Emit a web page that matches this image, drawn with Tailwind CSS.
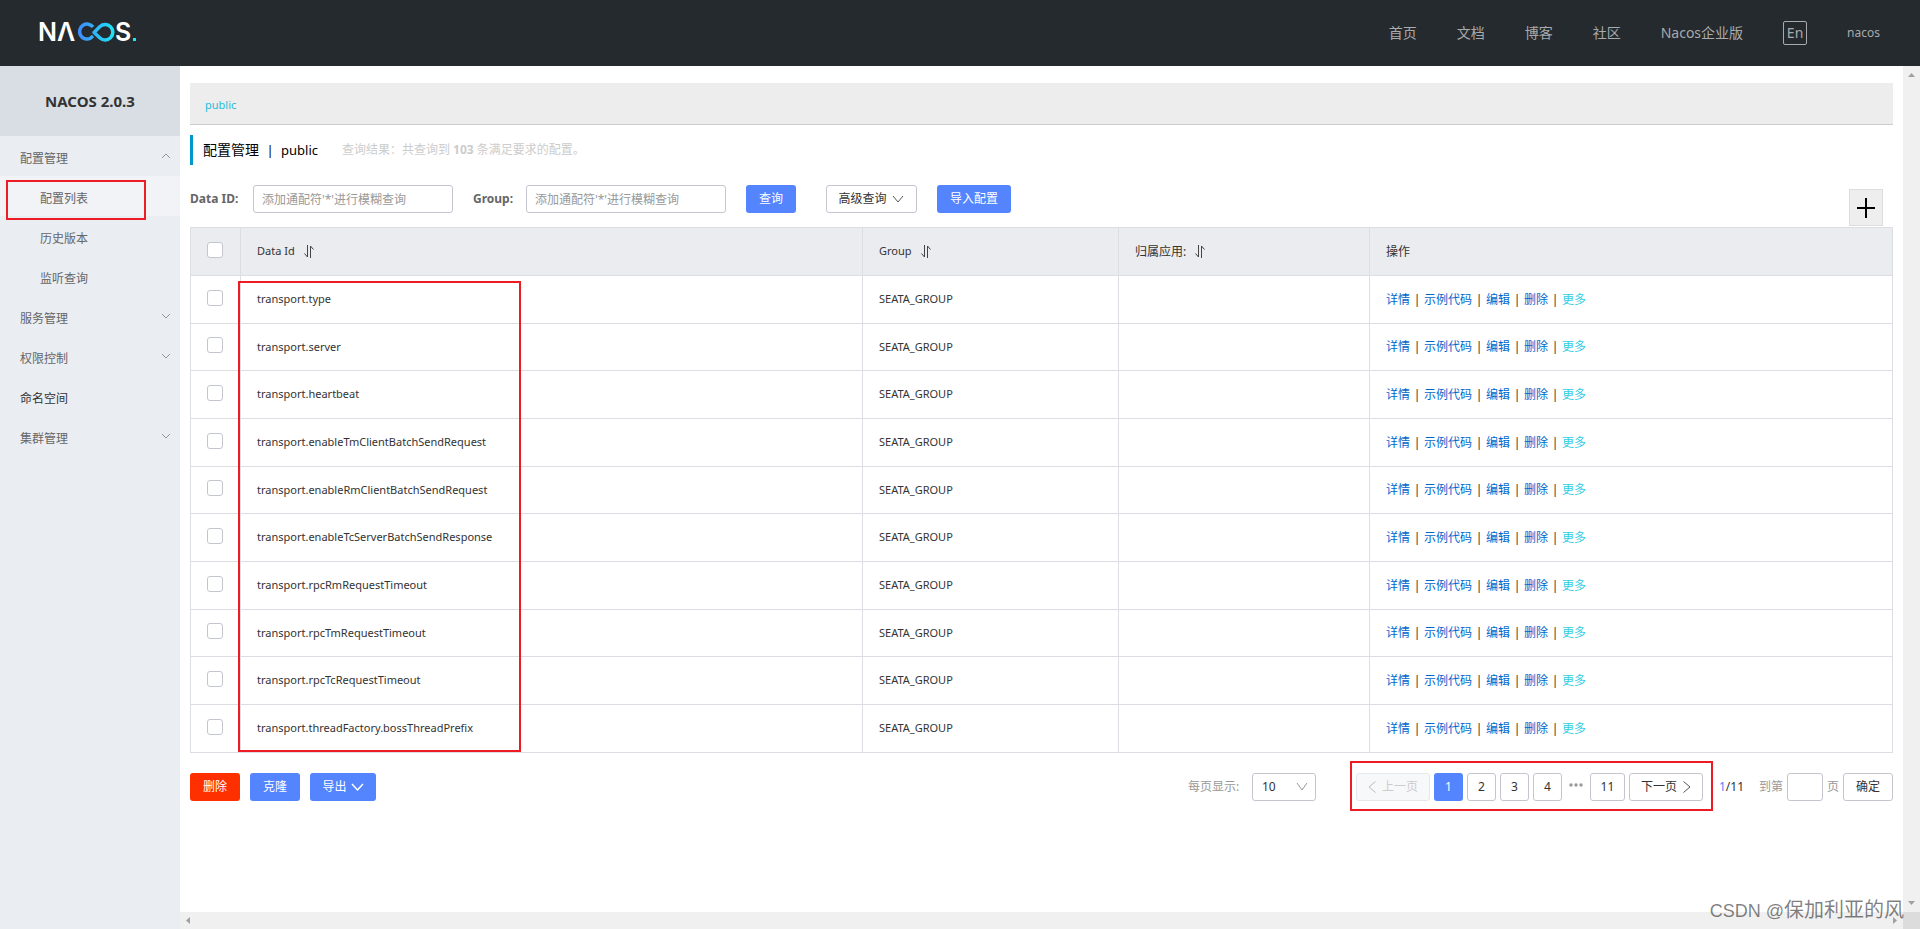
<!DOCTYPE html>
<html lang="zh-CN">
<head>
<meta charset="utf-8">
<title>Nacos</title>
<script src="https://cdn.jsdelivr.net/npm/@tailwindcss/browser@4"></script>
</head>
<body class="relative flex h-screen flex-col overflow-hidden bg-white font-['Noto_Sans','Noto_Sans_CJK_SC',sans-serif] text-xs text-[#333]">

<header class="flex h-[66px] shrink-0 items-center justify-between bg-[#252a2f] pl-9 pr-10 text-[#a8aaac]">
  <a href="#" aria-label="NACOS">
    <svg width="104" height="44" viewBox="-4 -10 104 44" fill="none">
      <defs>
        <linearGradient id="loop" gradientUnits="userSpaceOnUse" x1="36" y1="0" x2="76" y2="0">
          <stop offset="0" stop-color="#4285ff"/><stop offset="1" stop-color="#1be9f2"/>
        </linearGradient>
      </defs>
      <g fill="#fff" font-family="Inter, sans-serif" font-weight="600" font-size="25">
        <text x="-2" y="20">N</text><text x="17" y="20">Λ</text><text x="75" y="20">S</text>
      </g>
      <path d="M53 6A7.500 7.500 0 1 0 50 17.500L53 15" stroke="url(#loop)" stroke-width="3.500"/>
      <path d="M54 11.500L60 5.500A7.700 7.700 0 1 1 60 17Z" stroke="url(#loop)" stroke-width="3.500" stroke-linejoin="round"/>
      <rect x="93" y="17" width="3" height="3" fill="#1be9f2"/>
    </svg>
  </a>
  <nav class="flex items-center gap-10 text-sm">
    <a href="#">首页</a><a href="#">文档</a><a href="#">博客</a><a href="#">社区</a><a href="#">Nacos企业版</a>
    <button class="h-6 w-6 rounded-xs border border-[#a8aaac] leading-5">En</button>
    <a href="#" class="text-xs">nacos</a>
  </nav>
</header>

<div class="flex min-h-0 flex-1">
  <aside class="w-[180px] shrink-0 bg-[#eaedf2] text-[#666]">
    <h1 class="flex h-[70px] items-center justify-center bg-[#d9dde4] text-[15px] font-bold text-[#333]">NACOS 2.0.3</h1>
    <ul class="leading-[34px]">
      <li><a href="#" class="flex items-center justify-between pl-5 pr-2 pt-1.5">配置管理<svg class="mb-1.5" width="12" height="12" viewBox="0 0 12 12" fill="none" stroke="#999"><path d="M2 8L6 4L10 8"/></svg></a></li>
      <li class="bg-[#f2f3f7]"><a href="#" class="block pl-10 pt-1.5">配置列表</a></li>
      <li><a href="#" class="block pl-10 pt-1.5">历史版本</a></li>
      <li><a href="#" class="block pl-10 pt-1.5">监听查询</a></li>
      <li><a href="#" class="flex items-center justify-between pl-5 pr-2 pt-1.5">服务管理<svg class="mb-1.5" width="12" height="12" viewBox="0 0 12 12" fill="none" stroke="#999"><path d="M2 4L6 8L10 4"/></svg></a></li>
      <li><a href="#" class="flex items-center justify-between pl-5 pr-2 pt-1.5">权限控制<svg class="mb-1.5" width="12" height="12" viewBox="0 0 12 12" fill="none" stroke="#999"><path d="M2 4L6 8L10 4"/></svg></a></li>
      <li><a href="#" class="block pl-5 pt-1.5 text-[#333]">命名空间</a></li>
      <li><a href="#" class="flex items-center justify-between pl-5 pr-2 pt-1.5">集群管理<svg class="mb-1.5" width="12" height="12" viewBox="0 0 12 12" fill="none" stroke="#999"><path d="M2 4L6 8L10 4"/></svg></a></li>
    </ul>
  </aside>

  <div class="flex min-w-0 flex-1 flex-col">
    <div class="flex min-h-0 flex-1">
      <main class="min-w-0 flex-1 px-2.5 pt-[17px]">
        <div class="flex h-[42px] items-center border-b border-[#ccc] bg-[#ededed] px-[15px] pt-1"><a href="#" class="text-[11px] text-[#1fbcdc]">public</a></div>
        <div class="mt-2.5 flex h-[30px] items-center border-l-3 border-[#0098cc] pl-2.5">
          <h2 class="flex items-center text-sm text-black">配置管理<span class="w-[22px] text-center text-[13px]">|</span><span class="text-[13px]">public</span></h2>
          <p class="ml-6 text-[#ccc]">查询结果：共查询到 <strong>103</strong> 条满足要求的配置。</p>
        </div>

        <form class="mt-5 flex items-center" onsubmit="return false">
          <label for="dataId" class="w-[63px] font-bold text-[#666]">Data ID:</label>
          <input id="dataId" type="text" placeholder="添加通配符'*'进行模糊查询" class="h-7 w-[200px] rounded-[3px] border border-[#c4c6cf] px-2 placeholder:text-[#999]">
          <label for="group" class="ml-5 w-[53px] font-bold text-[#666]">Group:</label>
          <input id="group" type="text" placeholder="添加通配符'*'进行模糊查询" class="h-7 w-[200px] rounded-[3px] border border-[#c4c6cf] px-2 placeholder:text-[#999]">
          <button class="ml-5 h-7 w-[50px] rounded-[3px] bg-[#5584ff] text-white">查询</button>
          <button class="ml-[30px] flex h-7 w-[91px] items-center justify-center gap-1 rounded-[3px] border border-[#c4c6cf]">高级查询<svg width="14" height="14" viewBox="0 0 14 14" fill="none" stroke="#555"><path d="M2 4L7 10L12 4"/></svg></button>
          <button class="ml-5 h-7 w-[74px] rounded-[3px] bg-[#5584ff] text-white">导入配置</button>
          <button aria-label="新建配置" class="-mb-[17px] ml-auto mr-2.5 flex h-[37px] w-[34px] items-center justify-center border border-[#ddd] bg-[#eee]"><svg width="20" height="20" viewBox="0 0 20 20" stroke="#000" stroke-width="2"><path d="M1 10H19M10 0V20"/></svg></button>
        </form>

        <table class="mt-3.5 w-full table-fixed border-collapse text-left">
          <colgroup><col class="w-[50px]"><col class="w-[622px]"><col class="w-[256px]"><col class="w-[251px]"><col></colgroup>
          <thead>
            <tr class="h-12 bg-[#ebecf0]">
              <th class="border border-[#dcdee3] p-0 pr-0.5 pb-1 text-center align-middle"><input type="checkbox" aria-label="全选" class="mx-auto block size-4 appearance-none rounded-[3px] border border-[#c4c6cf] bg-white"></th>
              <th class="border border-[#dcdee3] px-4 py-0 text-[11px] font-normal"><span class="flex items-center gap-2">Data Id<svg width="12" height="13" viewBox="0 0 12 13" fill="none" stroke="#444"><path d="M4.500 0V12L1.500 8.500M7.500 13V1L10.500 4.500"/></svg></span></th>
              <th class="border border-[#dcdee3] px-4 py-0 text-[11px] font-normal"><span class="flex items-center gap-2">Group<svg width="12" height="13" viewBox="0 0 12 13" fill="none" stroke="#444"><path d="M4.500 0V12L1.500 8.500M7.500 13V1L10.500 4.500"/></svg></span></th>
              <th class="border border-[#dcdee3] px-4 py-0 font-normal"><span class="flex items-center gap-2">归属应用:<svg width="12" height="13" viewBox="0 0 12 13" fill="none" stroke="#444"><path d="M4.500 0V12L1.500 8.500M7.500 13V1L10.500 4.500"/></svg></span></th>
              <th class="border border-[#dcdee3] px-4 py-0 font-normal">操作</th>
            </tr>
          </thead>
          <tbody id="rows"></tbody>
        </table>

        <div class="mt-5 flex items-center justify-between">
          <div class="flex gap-2.5 text-white">
            <button class="h-7 w-[50px] rounded-[3px] bg-[#ff3000]">删除</button>
            <button class="h-7 w-[50px] rounded-[3px] bg-[#5584ff]">克隆</button>
            <button class="flex h-7 w-[66px] items-center justify-center gap-1 rounded-[3px] bg-[#5584ff]">导出<svg width="13" height="13" viewBox="0 0 13 13" fill="none" stroke="#fff" stroke-width="1.500"><path d="M1 3L6.500 9L12 3"/></svg></button>
          </div>
          <div class="flex items-center gap-1">
            <label for="size" class="w-[60px] text-[#999]">每页显示:</label>
            <div class="relative mr-9">
              <select id="size" class="h-7 w-16 appearance-none rounded-[3px] border border-[#c4c6cf] bg-white px-[9px]"><option>10</option></select>
              <svg class="pointer-events-none absolute right-2 top-2" width="12" height="12" viewBox="0 0 12 12" fill="none" stroke="#999"><path d="M1 2L6 9L11 2"/></svg>
            </div>
            <button disabled class="flex h-7 w-[74px] items-center justify-center gap-1.5 rounded-[3px] border border-[#e6e7eb] bg-[#f7f8fa] text-[#ccc]"><svg width="8" height="12" viewBox="0 0 8 12" fill="none" stroke="#bbb"><path d="M7.500 0.500L1 6L7.500 11.500"/></svg>上一页</button>
            <button class="h-7 w-[29px] rounded-[3px] bg-[#5584ff] text-white">1</button>
            <button class="h-7 w-[29px] rounded-[3px] border border-[#c4c6cf]">2</button>
            <button class="h-7 w-[29px] rounded-[3px] border border-[#c4c6cf]">3</button>
            <button class="h-7 w-[29px] rounded-[3px] border border-[#c4c6cf]">4</button>
            <svg class="mx-[3px] mb-1" width="14" height="4" viewBox="0 0 14 4" fill="#999"><circle cx="2" cy="2" r="1.700"/><circle cx="7" cy="2" r="1.700"/><circle cx="12" cy="2" r="1.700"/></svg>
            <button class="h-7 w-[35px] rounded-[3px] border border-[#c4c6cf]">11</button>
            <button class="flex h-7 w-[74px] items-center justify-center gap-1.5 rounded-[3px] border border-[#c4c6cf]">下一页<svg width="8" height="12" viewBox="0 0 8 12" fill="none" stroke="#555"><path d="M0.500 0.500L7 6L0.500 11.500"/></svg></button>
            <span class="ml-3 w-9"><span class="text-[#5584ff]">1</span>/11</span>
            <label for="jump" class="text-[#999]">到第</label>
            <input id="jump" type="text" class="h-7 w-9 rounded-[3px] border border-[#c4c6cf] px-2">
            <span class="text-[#999]">页</span>
            <button class="h-7 w-[50px] rounded-[3px] border border-[#c4c6cf]">确定</button>
          </div>
        </div>
      </main>
      <div class="flex w-[17px] shrink-0 flex-col items-center justify-between bg-[#f0f0f0] py-[7px]">
        <svg width="7" height="4" viewBox="0 0 7 4" fill="#a0a0a0"><path d="M3.500 0L7 4H0Z"/></svg>
        <svg width="7" height="4" viewBox="0 0 7 4" fill="#a0a0a0"><path d="M3.500 4L7 0H0Z"/></svg>
      </div>
    </div>
    <div class="flex h-[17px] shrink-0 bg-[#dcdcdc]">
      <div class="flex flex-1 items-center justify-between bg-[#f0f0f0] px-1.5">
        <svg width="4" height="7" viewBox="0 0 4 7" fill="#a0a0a0"><path d="M0 3.500L4 0V7Z"/></svg>
        <svg width="4" height="7" viewBox="0 0 4 7" fill="#a0a0a0"><path d="M4 3.500L0 0V7Z"/></svg>
      </div>
      <div class="w-[17px]"></div>
    </div>
  </div>
</div>

<!-- Annotation frames and watermark -->
<div class="pointer-events-none absolute left-1.5 top-[180px] h-10 w-[140px] border-2 border-[#ed1c24]"></div>
<div class="pointer-events-none absolute left-[238px] top-[281px] h-[471px] w-[283px] border-2 border-[#ed1c24]"></div>
<div class="pointer-events-none absolute right-[207px] top-[761px] h-[50px] w-[363px] border-2 border-[#ed1c24]"></div>
<p class="pointer-events-none absolute bottom-1 right-4 font-['Liberation_Sans','Noto_Sans_CJK_SC',sans-serif] text-xl leading-7 text-black/50"><span class="text-lg leading-7">CSDN @</span>保加利亚的风</p>

<script>
  const ids = [
    'transport.type', 'transport.server', 'transport.heartbeat',
    'transport.enableTmClientBatchSendRequest', 'transport.enableRmClientBatchSendRequest',
    'transport.enableTcServerBatchSendResponse', 'transport.rpcRmRequestTimeout',
    'transport.rpcTmRequestTimeout', 'transport.rpcTcRequestTimeout',
    'transport.threadFactory.bossThreadPrefix'
  ];
  const sep = '<span class="inline-block w-3.5 text-center text-[#333]">|</span>';
  document.getElementById('rows').innerHTML = ids.map(id => `
    <tr class="h-12 nth-[3n+2]:h-[47px]">
      <td class="border border-[#dcdee3] p-0 pr-0.5 pb-1 align-middle"><input type="checkbox" aria-label="${id}" class="mx-auto block size-4 appearance-none rounded-[3px] border border-[#c4c6cf] bg-white"></td>
      <td class="border border-[#dcdee3] px-4 py-0 text-[11px]">${id}</td>
      <td class="border border-[#dcdee3] px-4 py-0 text-[11px]">SEATA_GROUP</td>
      <td class="border border-[#dcdee3] px-4 py-0"></td>
      <td class="border border-[#dcdee3] px-4 py-0 text-[#06c]"><a href="#">详情</a>${sep}<a href="#">示例代码</a>${sep}<a href="#">编辑</a>${sep}<a href="#">删除</a>${sep}<a href="#" class="text-[#33cde5]">更多</a></td>
    </tr>`).join('');
</script>
</body>
</html>
